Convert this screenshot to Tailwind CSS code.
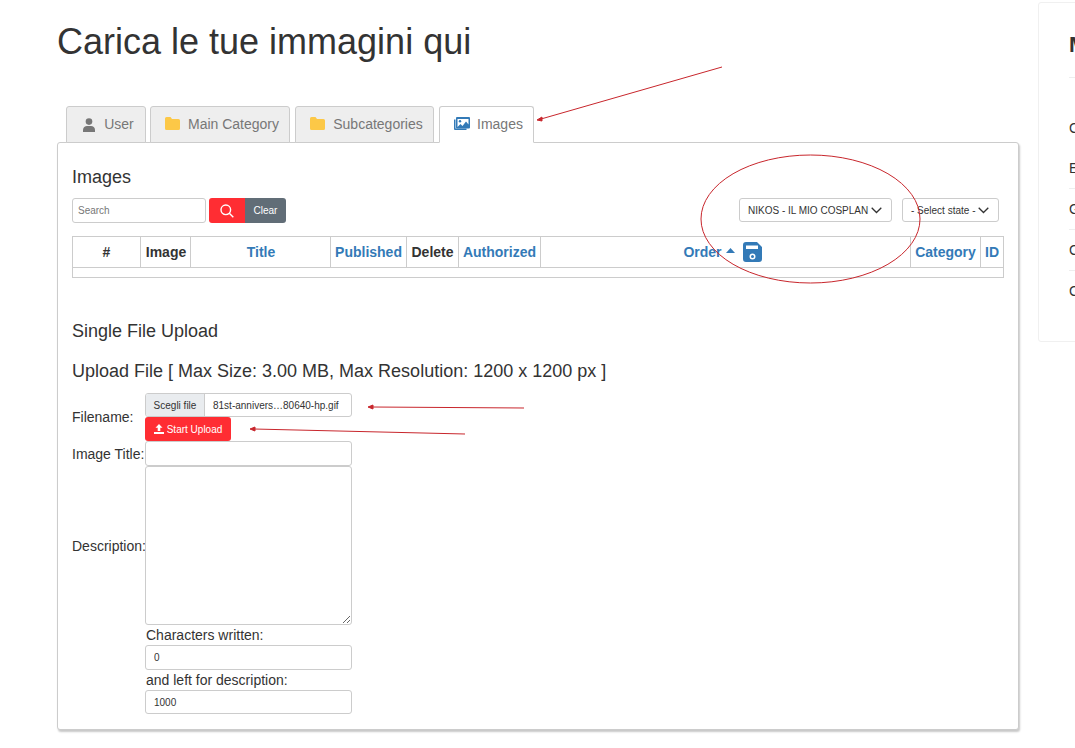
<!DOCTYPE html>
<html lang="it">

<head>
    <meta charset="UTF-8">
    <meta name="viewport" content="width=device-width, initial-scale=1">
    <title>Carica le tue immagini qui</title>
    <script src="https://cdn.jsdelivr.net/npm/@tailwindcss/browser@4"></script>
</head>

<body class="relative h-[748px] overflow-hidden bg-white font-['Liberation_Sans',Arial,sans-serif] text-[#333]">
    <div class="flex items-start pl-[57px]">
        <!-- Main column -->
        <main class="w-[962px] shrink-0">
            <h1 class="h-[106px] pt-[21px] text-[36px] leading-[42px]">Carica le tue immagini qui</h1>

            <!-- Tabs -->
            <ul class="relative z-10 -mb-px ml-[9px] flex h-[37px] items-stretch text-[14px] text-[#777]">
                <li class="mr-[4px] flex w-[80px] items-center justify-center gap-[8px] rounded-t-[3px] border border-[#ccc] bg-[#eee] pl-[4px]">
                    <svg class="h-[14px] w-[14px]" viewBox="0 0 14 14" fill="#777"><circle cx="7" cy="3.6" r="3.3"/><path d="M1 14v-2.2C1 9.4 3 8 5 8h4c2 0 4 1.4 4 3.8V14z"/></svg>
                    User
                </li>
                <li class="mr-[5px] flex w-[140px] items-center justify-center gap-[8px] rounded-t-[3px] border border-[#ccc] bg-[#eee] pl-[4px]">
                    <svg class="mb-[3px] h-[13px] w-[15px]" viewBox="0 0 15 13" fill="#fcc847"><path d="M1.5 0h4l1.5 2h6.5A1.5 1.5 0 0 1 15 3.5v8a1.5 1.5 0 0 1-1.5 1.5h-12A1.5 1.5 0 0 1 0 11.500v-10A1.500 1.500 0 0 1 1.500 0z"/></svg>
                    Main Category
                </li>
                <li class="mr-[5px] flex w-[139px] items-center justify-center gap-[8px] rounded-t-[3px] border border-[#ccc] bg-[#eee] pl-[4px]">
                    <svg class="mb-[3px] h-[13px] w-[15px]" viewBox="0 0 15 13" fill="#fcc847"><path d="M1.5 0h4l1.5 2h6.5A1.5 1.5 0 0 1 15 3.5v8a1.5 1.5 0 0 1-1.5 1.5h-12A1.5 1.5 0 0 1 0 11.500v-10A1.500 1.500 0 0 1 1.500 0z"/></svg>
                    Subcategories
                </li>
                <li class="flex w-[95px] items-center justify-center gap-[7px] rounded-t-[3px] border border-[#ccc] border-b-white bg-white pl-[4px]">
                    <svg class="mb-px h-[15px] w-[16px]" viewBox="0 0 16 15" fill="#337ab7"><path d="M0 2.500h1.500v9h11V13H1a1 1 0 0 1-1-1z"/><path fill-rule="evenodd" d="M3 0h12a1 1 0 0 1 1 1v9.500a1 1 0 0 1-1 1H3a1 1 0 0 1-1-1V1a1 1 0 0 1 1-1zm.500 2v8l3-3 2 2 3.500-4.500 2.500 3V2z"/><circle cx="6" cy="4.200" r="1.200"/></svg>
                    Images
                </li>
            </ul>

            <!-- Panel -->
            <section class="h-[588px] rounded-[3px] border border-[#ccc] bg-white px-[14px] pt-[23px] shadow-[1px_2px_2px_rgba(0,0,0,0.22)]">
                <h3 class="text-[18px] leading-[22px]">Images</h3>

                <div class="mt-[10px] flex h-[25px] items-start justify-between pr-[5px]">
                    <div class="flex">
                        <input class="h-[25px] w-[134px] rounded-[3px] border border-[#ccc] px-[5px] text-[10px] placeholder:text-[#777]" placeholder="Search">
                        <button class="ml-[3px] flex h-[25px] w-[36px] items-center justify-center rounded-l-[3px] bg-[#ff2d33]">
                            <svg class="h-[14px] w-[14px]" viewBox="0 0 14 14" fill="none" stroke="#fff" stroke-width="1.400"><circle cx="5.800" cy="5.800" r="4.800"/><path d="M9.300 9.300 13.300 13.300"/></svg>
                        </button>
                        <button class="h-[25px] w-[41px] rounded-r-[3px] bg-[#616d77] text-[10px] text-white">Clear</button>
                    </div>
                    <div class="flex gap-[10px] text-[10px]">
                        <div class="flex h-[24px] w-[153px] items-center justify-between rounded-[3px] border border-[#ccc] pl-[8px] pr-[9px]">
                            NIKOS - IL MIO COSPLAN
                            <svg class="h-[7px] w-[11px]" viewBox="0 0 11 7" fill="none" stroke="#333" stroke-width="1.300"><path d="M.7.7 5.500 5.500 10.300.7"/></svg>
                        </div>
                        <div class="flex h-[24px] w-[97px] items-center justify-between rounded-[3px] border border-[#ccc] pl-[8px] pr-[9px]">
                            - Select state -
                            <svg class="h-[7px] w-[11px]" viewBox="0 0 11 7" fill="none" stroke="#333" stroke-width="1.300"><path d="M.7.7 5.500 5.500 10.300.7"/></svg>
                        </div>
                    </div>
                </div>

                <!-- Table -->
                <table class="mt-[13px] w-[931px] table-fixed border-collapse border border-[#ccc] text-[14px] font-bold">
                    <colgroup>
                        <col class="w-[68px]"><col class="w-[50px]"><col class="w-[140px]"><col class="w-[76px]"><col class="w-[52px]"><col class="w-[82px]"><col class="w-[370px]"><col class="w-[70px]"><col class="w-[23px]">
                    </colgroup>
                    <thead>
                        <tr class="h-[31px]">
                            <th class="border border-[#ccc]">#</th>
                            <th class="border border-[#ccc] pl-px">Image</th>
                            <th class="border border-[#ccc] pl-px text-[#337ab7]">Title</th>
                            <th class="border border-[#ccc] text-[#337ab7]">Published</th>
                            <th class="border border-[#ccc]">Delete</th>
                            <th class="border border-[#ccc] text-[#337ab7]">Authorized</th>
                            <th class="border border-[#ccc] text-[#337ab7]">
                                <span class="mr-[6px] inline-flex items-center">
                                    Order
                                    <svg class="mb-[3px] ml-[4px] h-[5px] w-[9px]" viewBox="0 0 9 5" fill="#337ab7"><path d="M4.500 0 9 5H0z"/></svg>
                                    <svg class="ml-[8px] h-[20px] w-[19px]" viewBox="0 0 19 20" fill="#337ab7"><path fill-rule="evenodd" d="M3 0h11l5 5v12a3 3 0 0 1-3 3H3a3 3 0 0 1-3-3V3a3 3 0 0 1 3-3zm0 3.500V7h12V3.500zM9.500 11.500a3 3 0 1 0 0 6 3 3 0 0 0 0-6zm0 1.500a1.500 1.500 0 1 1 0 3 1.500 1.500 0 0 1 0-3z"/></svg>
                                </span>
                            </th>
                            <th class="border border-[#ccc] text-[#337ab7]">Category</th>
                            <th class="border border-[#ccc] text-[#337ab7]">ID</th>
                        </tr>
                    </thead>
                    <tbody>
                        <tr class="h-[10px]"><td colspan="9"></td></tr>
                    </tbody>
                </table>

                <h4 class="mt-[42px] text-[18px] leading-[22px]">Single File Upload</h4>
                <h4 class="mt-[18px] text-[18px] leading-[22px]">Upload File [ Max Size: 3.00 MB, Max Resolution: 1200 x 1200 px ]</h4>

                <!-- Upload form -->
                <div class="mt-[11px] grid grid-cols-[73px_207px] items-center text-[14px]">
                    <label>Filename:</label>
                    <div>
                        <div class="flex h-[24px] items-center overflow-hidden rounded-[3px] border border-[#ccc] text-[10px]">
                            <span class="flex h-full w-[59px] items-center justify-center border-r border-[#ccc] bg-[#e9ecef]">Scegli file</span>
                            <span class="pl-[8px]">81st-annivers…80640-hp.gif</span>
                        </div>
                        <button class="flex h-[24px] w-[86px] items-center justify-center gap-[3px] rounded-[3px] bg-[#ff2d33] text-[10px] text-white">
                            <svg class="h-[10px] w-[10px]" viewBox="0 0 10 10" fill="#fff"><path d="M5 0 8.500 3.800H6.300V7H3.700V3.800H1.500zM0 8h10v2H0z"/></svg>
                            Start Upload
                        </button>
                    </div>

                    <label class="pt-[2px]">Image Title:</label>
                    <input class="h-[25px] rounded-[3px] border border-[#ccc]">

                    <label class="pt-[2px]">Description:</label>
                    <textarea class="block h-[159px] rounded-[3px] border border-[#ccc]"></textarea>

                    <div class="col-start-2 pl-px leading-[20px]">Characters written:</div>
                    <input class="col-start-2 h-[25px] rounded-[3px] border border-[#ccc] px-[8px] text-[10px]" value="0">
                    <div class="col-start-2 pl-px leading-[20px]">and left for description:</div>
                    <input class="col-start-2 h-[24px] rounded-[3px] border border-[#ccc] px-[8px] text-[10px]" value="1000">
                </div>
            </section>
        </main>

        <!-- Side card, cut by the window edge -->
        <aside class="ml-[19px] mt-[2px] h-[340px] w-[200px] shrink-0 rounded-[3px] border border-[#f0f0f0] pl-[30px] pt-[27px] text-[14px]">
            <h3 class="border-b border-[#eee] pb-[17px] text-[22px] font-bold leading-[30px]">Menu</h3>
            <ul class="mt-[29px]">
                <li class="h-[41px] leading-[43px]">Cosplan</li>
                <li class="h-[41px] border-b border-[#eee] leading-[40px]">Edit</li>
                <li class="h-[41px] border-b border-[#eee] leading-[40px]">Gallery</li>
                <li class="h-[41px] border-b border-[#eee] leading-[40px]">Contact</li>
                <li class="h-[41px] leading-[40px]">Credits</li>
            </ul>
        </aside>
    </div>

    <!-- Red markup drawn over the screenshot -->
    <svg class="pointer-events-none absolute left-0 top-0 h-[748px] w-[1075px]" viewBox="0 0 1075 748" fill="none" stroke="#c8262c">
        <path d="M722 67 541 119"/>
        <path d="M537 120 542 117 542 121z" fill="#c8262c"/>
        <ellipse cx="810.500" cy="219" rx="109.500" ry="64"/>
        <path d="M524 408 372 407"/>
        <path d="M368 407 373 405 373 409z" fill="#c8262c"/>
        <path d="M465 434 254 429"/>
        <path d="M250 429 255 427 255 431z" fill="#c8262c"/>
    </svg>
</body>

</html>
